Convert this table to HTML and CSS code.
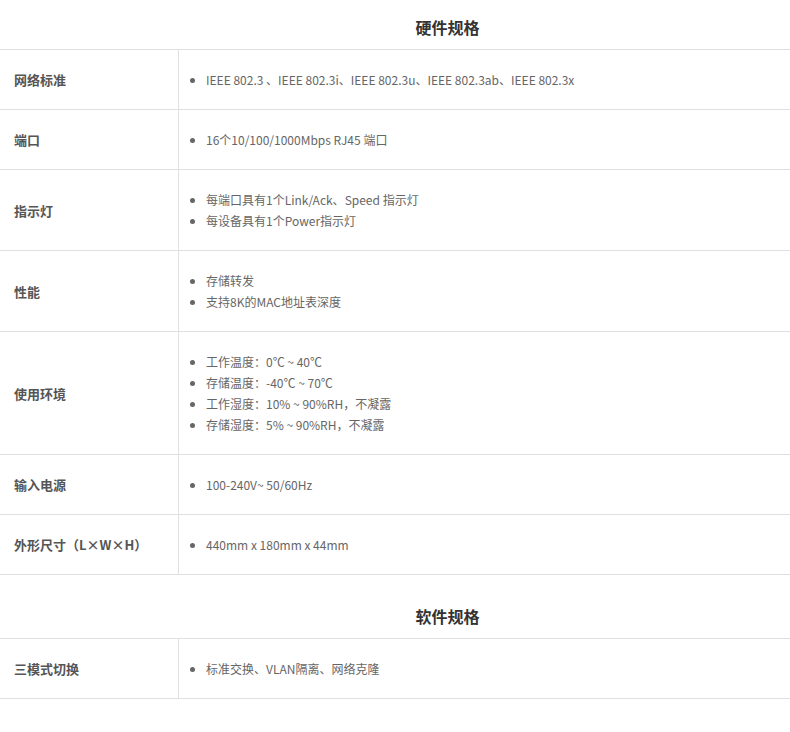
FILE: index.html
```html
<!DOCTYPE html>
<html lang="zh-CN">
<head>
<meta charset="utf-8">
<title>规格参数</title>
<link rel="stylesheet" href="styles.css">
</head>
<body>
<section class="spec">
  <h3 class="spec-title">硬件规格</h3>
  <table class="spec-table">
    <tr>
      <th>网络标准</th>
      <td><ul><li>IEEE 802.3 、IEEE 802.3i、IEEE 802.3u、IEEE 802.3ab、IEEE 802.3x</li></ul></td>
    </tr>
    <tr>
      <th>端口</th>
      <td><ul><li>16个10/100/1000Mbps RJ45 端口</li></ul></td>
    </tr>
    <tr>
      <th>指示灯</th>
      <td><ul><li>每端口具有1个Link/Ack、Speed 指示灯</li><li>每设备具有1个Power指示灯</li></ul></td>
    </tr>
    <tr>
      <th>性能</th>
      <td><ul><li>存储转发</li><li>支持8K的MAC地址表深度</li></ul></td>
    </tr>
    <tr>
      <th>使用环境</th>
      <td><ul><li>工作温度：0℃ ~ 40℃</li><li>存储温度：-40℃ ~ 70℃</li><li>工作湿度：10% ~ 90%RH，不凝露</li><li>存储湿度：5% ~ 90%RH，不凝露</li></ul></td>
    </tr>
    <tr>
      <th>输入电源</th>
      <td><ul><li>100-240V~ 50/60Hz</li></ul></td>
    </tr>
    <tr>
      <th>外形尺寸（L×W×H）</th>
      <td><ul><li>440mm x 180mm x 44mm</li></ul></td>
    </tr>
  </table>
</section>
<section class="spec spec-next">
  <h3 class="spec-title">软件规格</h3>
  <table class="spec-table">
    <tr>
      <th>三模式切换</th>
      <td><ul><li>标准交换、VLAN隔离、网络克隆</li></ul></td>
    </tr>
  </table>
</section>
</body>
</html>
```

FILE: styles.css
```css
html, body {
  margin: 0;
  padding: 0;
  background: #fff;
}
body {
  font-family: "Noto Sans CJK SC", "Noto Sans", "Liberation Sans", sans-serif;
  color: #666;
}
.spec-next {
  margin-top: 14px;
}
.spec-title {
  margin: 0;
  padding: 5px 0 0 105px;
  height: 44px;
  line-height: 44px;
  text-align: center;
  font-size: 16px;
  font-weight: bold;
  color: #333;
}
.spec-table {
  width: 100%;
  border-collapse: collapse;
}
.spec-table th,
.spec-table td {
  border-top: 1px solid #e0e0e0;
  border-bottom: 1px solid #e0e0e0;
  vertical-align: middle;
}
.spec-table th {
  width: 164px;
  padding: 0 0 0 14px;
  text-align: left;
  font-size: 13px;
  font-weight: bold;
  color: #555;
  border-right: 1px solid #e0e0e0;
  white-space: nowrap;
}
.spec-table td {
  padding: 19px 0 19px 12px;
}
.spec-table ul {
  margin: 0;
  padding: 0 0 0 15px;
  list-style: disc;
}
.spec-table li {
  font-size: 12px;
  line-height: 21px;
  color: #666;
}
```
